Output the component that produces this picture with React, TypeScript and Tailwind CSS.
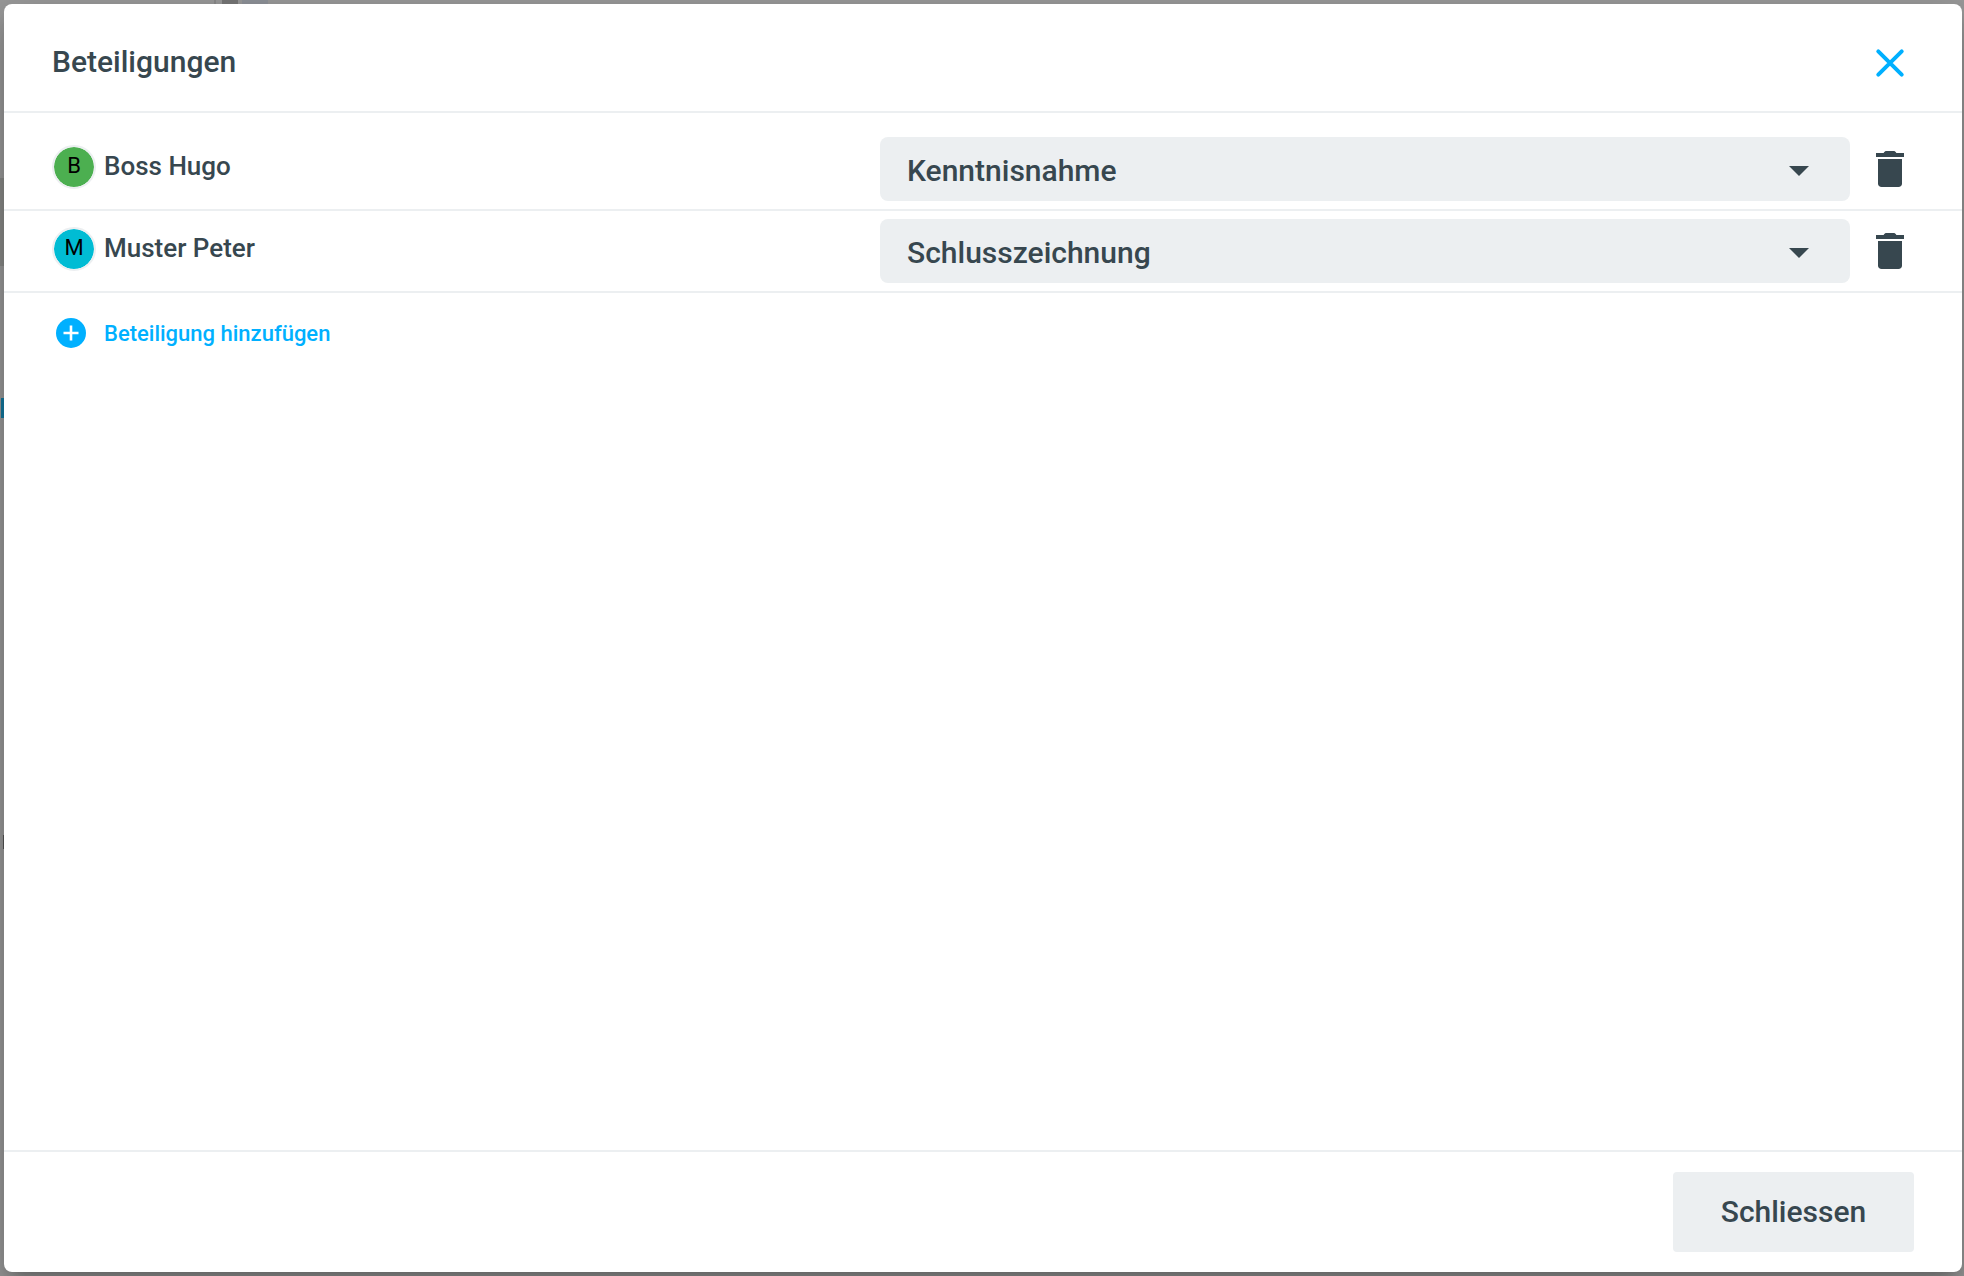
import { useState } from "react";

const roles = ["Kenntnisnahme", "Schlusszeichnung"];

const people = [
	{
		name: "Boss Hugo",
		initial: "B",
		color: "bg-[#4caf50]",
		role: "Kenntnisnahme",
	},
	{
		name: "Muster Peter",
		initial: "M",
		color: "bg-[#00bcd4]",
		role: "Schlusszeichnung",
	},
];

const CloseIcon = () => (
	<svg viewBox="0 0 48 48" className="size-12" aria-hidden="true">
		<path
			d="M12.300 12.300l23.400 23.400M35.700 12.300L12.300 35.700"
			stroke="currentColor"
			strokeWidth="4"
			strokeLinecap="round"
			fill="none"
		/>
	</svg>
);

const TrashIcon = () => (
	<svg viewBox="0 0 48 48" className="size-12" fill="currentColor" aria-hidden="true">
		<path d="M10 8h7.6c1-1.4 1.6-2 3-2h6.8c1.4 0 2 .6 3 2H38v4H10z" />
		<path d="M12 14h24v24.500c0 2-1.500 3.500-3.500 3.500h-17c-2 0-3.500-1.500-3.500-3.500z" />
	</svg>
);

const AddIcon = () => (
	<svg viewBox="0 0 30 30" className="size-[30px]" aria-hidden="true">
		<circle cx="15" cy="15" r="15" fill="currentColor" />
		<path d="M15 7.500v15M7.500 15h15" stroke="#fff" strokeWidth="2.6" />
	</svg>
);

// dimmed page behind the dialog
const Backdrop = () => (
	<div className="absolute inset-0 flex flex-col bg-[#9b9b9b]" aria-hidden="true">
		<div className="flex h-1 pl-[214px]">
			<span className="w-0.5 bg-[#8c8c8c]" />
			<span className="ml-1.5 w-4 bg-[#787878]" />
			<span className="ml-1 w-[26px] bg-[#90949a]" />
		</div>
		<div className="mt-[174px] h-[88px] w-1 bg-[#8a8b89]" />
		<div className="mt-[132px] ml-px h-5 w-1 bg-[#147aa0]" />
		<div className="mt-[417px] ml-[3px] h-3.5 w-1 bg-[#555]" />
	</div>
);

const PersonRow = ({ name, initial, color, role }: (typeof people)[number]) => {
	const [value, setValue] = useState(role);

	return (
		<li className="grid grid-cols-[406fr_485fr_48px] items-center gap-4 border-b-2 border-[#eceff1] px-12 py-2">
			<div className="flex items-center gap-2 pb-1">
				<span
					className={`flex size-11 items-center justify-center rounded-full border-2 border-[#eceff1] bg-clip-padding pb-0.5 text-[22px] leading-6 text-black ${color}`}
				>
					{initial}
				</span>
				<span className="pb-0.5 text-[26px] leading-8 font-medium">{name}</span>
			</div>
			<div className="relative">
				<select
					aria-label={`Beteiligung von ${name}`}
					value={value}
					onChange={(e) => setValue(e.target.value)}
					className="block h-16 w-full appearance-none rounded-lg bg-[#eceff1] pt-0.5 pr-20 pl-[27px] text-[30px] font-medium"
				>
					{roles.map((r) => (
						<option key={r}>{r}</option>
					))}
				</select>
				<svg
					viewBox="0 0 20 10"
					className="pointer-events-none absolute top-[29px] right-[41px] h-2.5 w-5"
					fill="currentColor"
					aria-hidden="true"
				>
					<path d="M0 0h20L10 10z" />
				</svg>
			</div>
			<button type="button" aria-label={`${name} entfernen`}>
				<TrashIcon />
			</button>
		</li>
	);
};

export default function App() {
	return (
		<div className="relative flex min-h-screen py-1 pr-0.5 pl-1 font-['Roboto',sans-serif] text-[#37474f]">
			<Backdrop />
			<div
				role="dialog"
				aria-labelledby="dialog-title"
				className="relative flex flex-1 flex-col rounded-lg bg-white shadow-[0_11px_15px_-7px_rgba(0,0,0,0.2),0_24px_38px_3px_rgba(0,0,0,0.14),0_9px_46px_8px_rgba(0,0,0,0.12)]"
			>
				<header className="flex items-center justify-between border-b-2 border-[#eceff1] px-12 pt-[35px] pb-6">
					<h1 id="dialog-title" className="pb-0.5 text-[30px] leading-10 font-medium">
						Beteiligungen
					</h1>
					<button type="button" aria-label="Dialog schliessen" className="text-[#00b0ff]">
						<CloseIcon />
					</button>
				</header>

				<main className="flex-1 pt-4">
					<ul>
						{people.map((person) => (
							<PersonRow key={person.name} {...person} />
						))}
					</ul>
					<button
						type="button"
						className="mt-6 ml-[52px] flex items-center gap-[18px] text-[22px] leading-8 font-medium text-[#00b0ff]"
					>
						<AddIcon />
						<span className="pt-0.5 leading-[30px]">Beteiligung hinzufügen</span>
					</button>
				</main>

				<footer className="flex justify-end border-t-2 border-[#eceff1] px-12 py-5">
					<button
						type="button"
						className="h-20 min-w-[241px] rounded bg-[#eceff1] px-11 pb-0.5 text-[30px] font-medium"
					>
						Schliessen
					</button>
				</footer>
			</div>
		</div>
	);
}
